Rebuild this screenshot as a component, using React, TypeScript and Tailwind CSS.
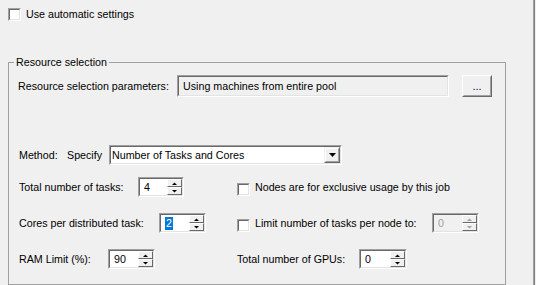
import React from "react";

function Arrow({ up, disabled }: { up?: boolean; disabled?: boolean }) {
  return (
    <svg width="5" height="3" viewBox="0 0 5 3" className="block">
      <polygon
        points={up ? "0,3 2.5,0.5 5,3" : "0,0 2.5,2.5 5,0"}
        fill={disabled ? "#a0a0a0" : "#000"}
      />
    </svg>
  );
}

function SpinBtn({ up, disabled }: { up?: boolean; disabled?: boolean }) {
  return (
    <div className="h-[8px] flex items-center justify-center bg-[#f0f0f0] border border-t-white border-l-white border-b-[#696969] border-r-[#696969]">
      <Arrow up={up} disabled={disabled} />
    </div>
  );
}

function Sunken({
  className,
  inner,
  children,
}: {
  className: string;
  inner: string;
  children: React.ReactNode;
}) {
  return (
    <div
      className={`flex border border-t-[#a0a0a0] border-l-[#a0a0a0] border-b-white border-r-white ${className}`}
    >
      <div
        className={`flex flex-1 min-w-0 border border-t-[#696969] border-l-[#696969] border-b-[#e3e3e3] border-r-[#e3e3e3] ${inner}`}
      >
        {children}
      </div>
    </div>
  );
}

function Spin({
  value,
  width,
  disabled,
  selected,
}: {
  value: string;
  width: string;
  disabled?: boolean;
  selected?: boolean;
}) {
  return (
    <Sunken
      className={`h-[20px] ${width}`}
      inner={disabled ? "bg-[#f0f0f0]" : "bg-white"}
    >
      <div className="flex-1 flex items-center pl-[4px]">
        {selected ? (
          <span className="bg-[#0078d7] text-white leading-[13px] px-[1px]">{value}</span>
        ) : (
          <span className={`leading-[14px] ${disabled ? "text-[#a0a0a0]" : ""}`}>{value}</span>
        )}
      </div>
      <div className="w-[15px] flex flex-col">
        <SpinBtn up disabled={disabled} />
        <SpinBtn disabled={disabled} />
      </div>
    </Sunken>
  );
}

function Check() {
  return (
    <Sunken className="w-[13px] h-[13px] shrink-0" inner="bg-white">
      <span />
    </Sunken>
  );
}

export default function App() {
  return (
    <div className="w-[536px] h-[285px] bg-[#f0f0f0] flex overflow-hidden text-[10.7px] text-black font-['Liberation_Sans',Arial,sans-serif]">
      <div className="w-[533px] flex flex-col">
        {/* top option */}
        <div className="flex items-center h-[13px] mt-[8px] ml-[8px]">
          <Check />
          <span className="ml-[5px] leading-[13px]">Use automatic settings</span>
        </div>

        {/* group box */}
        <div className="relative mt-[41px] ml-[8px] w-[498px] h-[300px] border border-[#a0a0a0] pl-[10px] pt-[12px]">
          <span className="absolute -top-[8px] left-[5px] px-[2px] bg-[#f0f0f0] leading-[14px]">
            Resource selection
          </span>

          <div className="flex items-center h-[22px]">
            <span className="-ml-px w-[159px]">Resource selection parameters:</span>
            <Sunken className="w-[272px] h-[22px]" inner="bg-[#f0f0f0] items-center pl-[4px]">
              <span>Using machines from entire pool</span>
            </Sunken>
            <button className="ml-[13px] w-[30px] h-[22px] flex border border-t-white border-l-white border-b-[#696969] border-r-[#696969]">
              <span className="flex-1 flex items-center justify-center border border-t-[#f0f0f0] border-l-[#f0f0f0] border-b-[#a0a0a0] border-r-[#a0a0a0] bg-[#f0f0f0] text-[#000060] pt-[1px]">
                ...
              </span>
            </button>
          </div>

          <div className="flex items-center h-[20px] mt-[48px]">
            <span className="w-[48px]">Method:</span>
            <span className="w-[42px]">Specify</span>
            <Sunken className="w-[233px] h-[20px]" inner="bg-white">
              <span className="flex-1 flex items-center pl-[1px]">Number of Tasks and Cores</span>
              <div className="w-[16px] flex border border-t-[#f0f0f0] border-l-[#f0f0f0] border-b-[#696969] border-r-[#696969]">
                <div className="flex-1 flex items-center justify-center bg-[#f0f0f0] border border-t-white border-l-white border-b-[#a0a0a0] border-r-[#a0a0a0]">
                  <svg width="7" height="4" viewBox="0 0 7 4" className="block">
                    <polygon points="0,0 7,0 3.5,4" fill="#000" />
                  </svg>
                </div>
              </div>
            </Sunken>
          </div>

          <div className="flex items-center h-[20px] mt-[12px]">
            <span className="w-[119px]">Total number of tasks:</span>
            <Spin value="4" width="w-[46px]" />
            <div className="ml-[53px] flex items-center mt-[4px]">
              <Check />
            </div>
            <span className="ml-[5px]">Nodes are for exclusive usage by this job</span>
          </div>

          <div className="flex items-center h-[20px] mt-[16px]">
            <span className="w-[140px]">Cores per distributed task:</span>
            <Spin value="2" width="w-[47px]" selected />
            <div className="ml-[31px] flex items-center mt-[4px]">
              <Check />
            </div>
            <span className="ml-[5px] w-[177px]">Limit number of tasks per node to:</span>
            <Spin value="0" width="w-[47px]" disabled />
          </div>

          <div className="flex items-center h-[20px] mt-[16px]">
            <span className="w-[89px]">RAM Limit (%):</span>
            <Spin value="90" width="w-[47px]" />
            <span className="ml-[82px] w-[122px]">Total number of GPUs:</span>
            <Spin value="0" width="w-[48px]" />
          </div>
        </div>
      </div>
      <div className="w-[2px] border-l border-[#a0a0a0] bg-[#808080]" />
      <div className="w-[1px] bg-[#f0f0f0]" />
    </div>
  );
}
